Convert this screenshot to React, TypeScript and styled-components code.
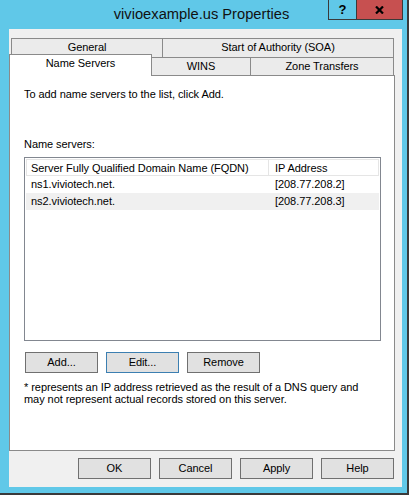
import React from "react";
import styled, { createGlobalStyle, css } from "styled-components";

const GlobalStyle = createGlobalStyle`
  * {
    box-sizing: border-box;
  }
  body {
    margin: 0;
    background: #ffffff;
    font-family: Tahoma, "Liberation Sans", Arial, sans-serif;
    font-size: 11px;
    letter-spacing: -0.06px;
    color: #000000;
  }
`;

const Window = styled.div`
  width: 409px;
  height: 495px;
  background: #60c8e8;
  border-right: 2px solid #3a3a3a;
  border-bottom: 2px solid #3a3a3a;
  display: flex;
  flex-direction: column;
`;

const TitleBar = styled.div`
  height: 29px;
  display: grid;
  grid-template-columns: 1fr auto 1fr;
  padding-right: 4px;
`;

const Title = styled.div`
  grid-column: 2;
  font-family: "Segoe UI", "Liberation Sans", Arial, sans-serif;
  font-size: 14.7px;
  letter-spacing: 0;
  line-height: 29px;
  color: #111111;
  white-space: nowrap;
`;

const Controls = styled.div`
  grid-column: 3;
  justify-self: end;
  align-self: start;
  display: flex;
`;

const CaptionButton = styled.div<{ $close?: boolean }>`
  height: 20px;
  display: flex;
  align-items: center;
  justify-content: center;
  border-bottom: 1px solid #3a3a3a;
  border-right: 1px solid #3a3a3a;
  font-family: "Liberation Sans", Arial, sans-serif;
  font-weight: bold;
  font-size: 13px;
  letter-spacing: 0;
  ${(p) =>
    p.$close
      ? css`
          width: 46px;
          background: #c75050;
        `
      : css`
          width: 29px;
          border-left: 1px solid #3a3a3a;
        `}
`;

const Client = styled.div`
  height: 458px;
  margin: 0 5px 0 9px;
  background: #f0f0f0;
  display: flex;
  flex-direction: column;
  padding: 9px 7px 8px 0;
`;

const TabStrip = styled.div`
  display: flex;
  flex-direction: column;
`;

const TabRow = styled.div<{ $height: number }>`
  display: flex;
  align-items: flex-start;
  height: ${(p) => p.$height}px;
  padding-left: 2px;
`;

const Tab = styled.div<{ $width: number; $height: number; $selected?: boolean }>`
  width: ${(p) => p.$width}px;
  height: ${(p) => p.$height}px;
  border: 1px solid #8a8a8a;
  border-bottom: none;
  background: #ebebeb;
  text-align: center;
  line-height: ${(p) => p.$height - 2}px;
  white-space: nowrap;
  & + & {
    margin-left: -1px;
  }
  ${(p) =>
    p.$selected &&
    css`
      position: relative;
      z-index: 1;
      margin-top: -3px;
      margin-left: -2px;
      background: #ffffff;
      line-height: 16px;
    `}
`;

const Panel = styled.div`
  flex: 1;
  border: 1px solid #8a8a8a;
  background: #ffffff;
  display: flex;
  flex-direction: column;
  padding: 12px 13px 0 14px;
`;

const Line = styled.p<{ $gap?: number }>`
  margin: ${(p) => p.$gap ?? 0}px 0 0;
  line-height: 13px;
`;

const ListBox = styled.div`
  margin-top: 6px;
  height: 184px;
  border: 1px solid #828790;
  padding: 1px;
`;

const HeaderRow = styled.div`
  display: flex;
  height: 17px;
  border-top: 1px solid #e5e5e5;
  border-bottom: 1px solid #e5e5e5;
`;

const HeaderCell = styled.div<{ $width: number; $first?: boolean }>`
  width: ${(p) => p.$width}px;
  border-right: 1px solid #e5e5e5;
  border-left: ${(p) => (p.$first ? "1px solid #e5e5e5" : "none")};
  padding: 1px 0 0 ${(p) => (p.$first ? 4 : 6)}px;
  line-height: 14px;
  white-space: nowrap;
`;

const Row = styled.div<{ $alt?: boolean }>`
  display: flex;
  height: 17px;
  line-height: 17px;
  background: ${(p) => (p.$alt ? "#f0f0f0" : "transparent")};
`;

const Cell = styled.div<{ $width: number; $pad: number }>`
  width: ${(p) => p.$width}px;
  padding-left: ${(p) => p.$pad}px;
  white-space: nowrap;
`;

const ButtonRow = styled.div<{ $end?: boolean }>`
  display: flex;
  gap: 8px;
  ${(p) =>
    p.$end
      ? css`
          justify-content: flex-end;
          margin-top: 7px;
          padding-right: 1px;
        `
      : css`
          margin-top: 11px;
          padding-left: 1px;
        `}
`;

const Button = styled.button<{ $focused?: boolean }>`
  width: 73px;
  height: 21px;
  padding: 0;
  border: 1px solid ${(p) => (p.$focused ? "#3c7fb1" : "#707070")};
  background: #e1e1e1;
  font: inherit;
  letter-spacing: inherit;
  line-height: 19px;
  color: #000000;
  text-align: center;
`;

const Footnote = styled.p`
  margin: 8px 0 0;
  line-height: 12px;
`;

const servers = [
  { name: "ns1.viviotech.net.", ip: "[208.77.208.2]" },
  { name: "ns2.viviotech.net.", ip: "[208.77.208.3]" },
];

export default function App() {
  return (
    <>
      <GlobalStyle />
      <Window>
        <TitleBar>
          <Title>vivioexample.us Properties</Title>
          <Controls>
            <CaptionButton>?</CaptionButton>
            <CaptionButton $close>
              <svg width="9" height="8" viewBox="0 0 9 8">
                <path d="M1 0.5 L8 7.5 M8 0.5 L1 7.5" stroke="#000" strokeWidth="2.2" />
              </svg>
            </CaptionButton>
          </Controls>
        </TitleBar>
        <Client>
          <TabStrip>
            <TabRow $height={19}>
              <Tab $width={152} $height={19}>General</Tab>
              <Tab $width={232} $height={19}>Start of Authority (SOA)</Tab>
            </TabRow>
            <TabRow $height={18}>
              <Tab $width={143} $height={22} $selected>
                Name Servers
              </Tab>
              <Tab $width={100} $height={18}>WINS</Tab>
              <Tab $width={144} $height={18}>Zone Transfers</Tab>
            </TabRow>
          </TabStrip>
          <Panel>
            <Line>To add name servers to the list, click Add.</Line>
            <Line $gap={37}>Name servers:</Line>
            <ListBox>
              <HeaderRow>
                <HeaderCell $width={243} $first>
                  Server Fully Qualified Domain Name (FQDN)
                </HeaderCell>
                <HeaderCell $width={110}>IP Address</HeaderCell>
              </HeaderRow>
              {servers.map((s, i) => (
                <Row key={s.name} $alt={i % 2 === 1}>
                  <Cell $width={243} $pad={5}>{s.name}</Cell>
                  <Cell $width={110} $pad={6}>{s.ip}</Cell>
                </Row>
              ))}
            </ListBox>
            <ButtonRow>
              <Button>Add...</Button>
              <Button $focused>Edit...</Button>
              <Button>Remove</Button>
            </ButtonRow>
            <Footnote>
              * represents an IP address retrieved as the result of a DNS query and
              <br />
              may not represent actual records stored on this server.
            </Footnote>
          </Panel>
          <ButtonRow $end>
            <Button>OK</Button>
            <Button>Cancel</Button>
            <Button>Apply</Button>
            <Button>Help</Button>
          </ButtonRow>
        </Client>
      </Window>
    </>
  );
}
